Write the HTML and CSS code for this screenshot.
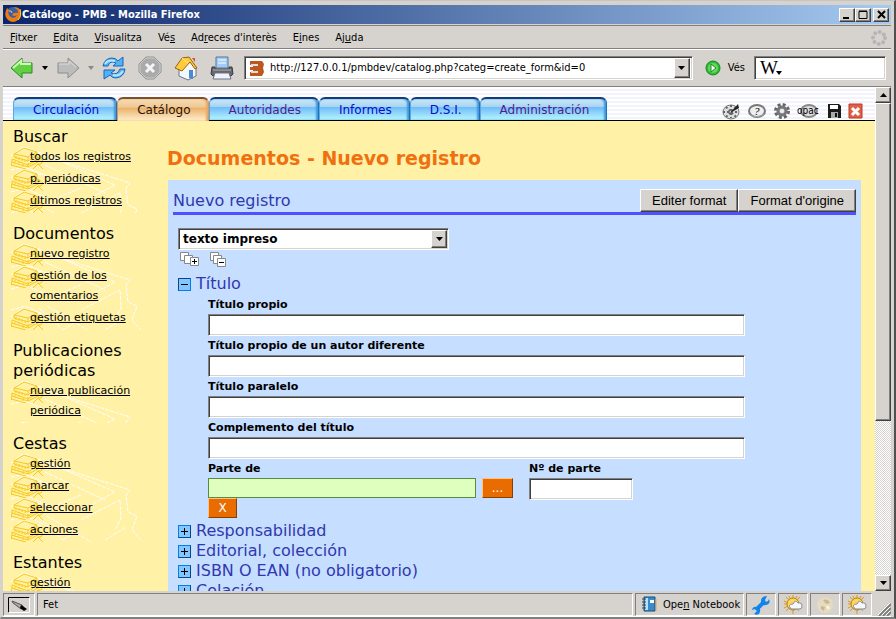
FILE: index.html
```html
<!DOCTYPE html>
<html lang="es">
<head>
<meta charset="utf-8">
<title>Catálogo - PMB</title>
<link rel="stylesheet" href="styles.css">
</head>
<body>
<svg class="defs" aria-hidden="true">
  <symbol id="books" viewBox="0 0 34 22">
    <path d="M0 9 12 0 30 6" fill="none" stroke="#fff"/>
    <g fill="none" stroke="#f8c818" stroke-width="1">
      <path d="M3 7 13 1 26 5 17 10ZM3 7v3l14 4 9-6V5M17 10v4M1 12l16 6 10-6-1-3M1 12v3l16 5 10-5v-3M17 16v4M0 18l15 4M27 10l5 4-2 3-3 0-5 5M27 17l5 5M1 15l-1 4"/>
      <path d="M5 9v3M8 10v3M11 11v3M14 12v3M4 14v3M8 15v3M12 17v3M20 10v3M23 8v3" stroke-dasharray="1 1"/>
    </g>
  </symbol>
  <symbol id="openbook" viewBox="0 0 132 88">
    <g fill="none" stroke="#fff" stroke-dasharray="4 1">
      <path d="M14 0 34 9 119 36 115 41 117 58 126 62 121 76 130 86M34 18 94 46M36 8 104 38 67 58M40 57 50 49 70 41M47 53 58 58M70 66 109 46 110 64 104 76M28 64 52 86M36 62 80 88M94 86 115 73M52 86 66 77M0 23 14 20 40 31M0 45 14 41 36 51M0 66 14 62 32 70"/>
    </g>
  </symbol>
  <symbol id="weather" viewBox="0 0 22 22">
    <path d="M11 1v4M11 16v4M2 10h4M15 10h5M4 3l4 4M18 3l-3 3M4 17l3-3M17 17l-3-3M7 2l2 4M15 2l-2 4M2 7l4 2M2 14l4-2" stroke="#e09818" stroke-width="1"/>
    <circle cx="11" cy="10" r="6" fill="#ffd758" stroke="#bd8010"/>
    <path d="M9 15q-4-5 2-5 2-5 5-1 4-1 4 4 0 2-3 2Z" fill="#f6f8ff" stroke="#858b9d"/>
  </symbol>
</svg>

<header class="titlebar">
  <svg width="17" height="17" viewBox="0 0 17 17"><circle cx="8" cy="8" r="7" fill="#335fae"/><path d="M8 2q5 0 5 5-5-1-6 2 2 2 5 0-2 4-6 2Q2 9 4 4L2 2q-4 8 1 12 5 4 10 0t2-10q-2-4-7-2" fill="#ec7b12"/><path d="M15 3q2 7-2 11" stroke="#ffd23c" fill="none"/><path d="m4 5 2 0 1 2" stroke="#ffc169" fill="none"/></svg>
  <span class="window-title">Catálogo - PMB - Mozilla Firefox</span>
  <button class="bevel winbtn" aria-label="Minimizar"><svg width="12" height="10"><path d="M2 8h6" stroke="#000" stroke-width="2"/></svg></button>
  <button class="bevel winbtn" aria-label="Maximizar"><svg width="12" height="10"><path d="M2 1.5h8v7h-8zM2 1h8" stroke="#000" fill="none"/></svg></button>
  <button class="bevel winbtn close" aria-label="Cerrar"><svg width="12" height="10"><path d="m3 1 7 7m0-7-7 7" stroke="#000" stroke-width="2"/></svg></button>
</header>

<nav class="menubar">
  <a href="#"><u>F</u>itxer</a><a href="#"><u>E</u>dita</a><a href="#"><u>V</u>isualitza</a><a href="#">Vé<u>s</u></a><a href="#">Ad<u>r</u>eces d'interès</a><a href="#">E<u>i</u>nes</a><a href="#">Aj<u>u</u>da</a>
  <svg class="throbber" width="16" height="16"><circle cx="8" cy="8" r="6" fill="none" stroke="#b5b5b5" stroke-width="4" stroke-linecap="round" stroke-dasharray="0 4.71"/></svg>
</nav>

<div class="toolbar">
  <button class="tool" aria-label="Atrás"><svg width="24" height="24"><path d="M1 12 12 2v5h10v10H12v5Z" fill="#63cf45" stroke="#268b25"/><path d="M3 12l8-7v3h10" stroke="#c8ffad" fill="none" stroke-width="2"/></svg></button>
  <button class="tool" aria-label="Historial atrás"><svg width="6" height="4"><path d="M0 0h6L3 4" fill="#000"/></svg></button>
  <button class="tool" aria-label="Adelante"><svg width="24" height="24"><path d="M23 12 12 2v5H2v10h10v5Z" fill="#bcbcbc" stroke="#8c8c8c"/><path d="M3 8h10V5l7 6" stroke="#dedede" fill="none"/></svg></button>
  <button class="tool" aria-label="Historial adelante"><svg width="6" height="4"><path d="M0 0h6L3 4" fill="#888"/></svg></button>
  <button class="tool wide" aria-label="Recargar"><svg width="24" height="24"><path d="M1 10Q3 2 10 2q4 0 6 3l5-4v9H11l3-3Q8 4 6 10ZM23 13q-1 8-9 9-4 0-6-3l-6 4V14h11l-4 3q6 3 9-4Z" fill="#50b3f4" stroke="#1d63bd"/><path d="M3 8q3-5 10-3M21 15q-4 6-10 4" stroke="#b9e9ff" fill="none" stroke-width="2"/></svg></button>
  <button class="tool wide" aria-label="Detener"><svg width="24" height="24"><path d="M8 1h8l7 7v8l-7 7H8l-7-7V8Z" fill="#aaa" stroke="#929292"/><path d="M8 2h8l6 6v8l-6 6H8l-6-6V8Z" fill="none" stroke="#ccc"/><path d="m8 8 8 8m0-8-8 8" stroke="#f4f4f4" stroke-width="3"/></svg></button>
  <button class="tool wide" aria-label="Inicio"><svg width="24" height="25"><path d="M5 12v8l9 4 8-4v-9l-7-6Z" fill="#f3f7ff" stroke="#687589"/><path d="M1 12 8 2l7-1 8 11-2 1-5-7-8 9Z" fill="#ffca3d" stroke="#97640b"/><path d="M8 2 14 7" stroke="#fff09a"/><path d="M15 14h4v9l-4-1z" fill="#4b8acd"/><path d="M18 2h3v4" fill="#d65029"/></svg></button>
  <button class="tool" aria-label="Imprimir"><svg width="24" height="25"><path d="M6 1h12v11H6z" fill="#9fcdf8" stroke="#5e7493"/><path d="M8 4h8M8 7h8" stroke="#fff"/><path d="M2 11h3v2h14v-2h3l1 7-2 2H3l-2-2Z" fill="#67676d" stroke="#39393e"/><path d="M3 14h18" stroke="#bbb"/><path d="M5 17h14l2 6H3Z" fill="#eef3ff" stroke="#6d7587"/></svg></button>
  <div class="sunken address">
    <svg width="16" height="17"><path d="M1 1h12l2 3-1 4 1 4-2 4H1v-4h3v-2H1V7h3V5H1Z" fill="#bd571d"/><path d="M2 5h7M2 12h7" stroke="#ddd" stroke-width="2"/></svg>
    <input type="text" aria-label="Dirección" value="http://127.0.0.1/pmbdev/catalog.php?categ=create_form&amp;id=0">
    <button class="bevel arrowbtn" aria-label="Abrir lista"><svg width="7" height="4"><path d="M0 0h7L3.5 4" fill="#000"/></svg></button>
  </div>
  <button class="tool go"><svg width="16" height="16"><circle cx="8" cy="8" r="7" fill="#31b73b" stroke="#168b20"/><circle cx="8" cy="8" r="5" fill="#67d95b"/><path d="m6 4 5 4-5 4Z" fill="#fff" stroke="#168b20"/></svg><span>Vés</span></button>
  <div class="sunken search"><span class="wiki">W</span><svg class="wikiarrow" width="6" height="4"><path d="M0 0h6L3 4" fill="#000"/></svg><input type="text" aria-label="Buscar en Wikipedia"></div>
</div>

<div class="viewport">
  <div class="page">
    <div class="pagehead">
      <nav class="tabs">
        <a href="#">Circulación</a><a href="#" class="active">Catálogo</a><a href="#" class="visited">Autoridades</a><a href="#">Informes</a><a href="#">D.S.I.</a><a href="#" class="visited">Administración</a>
      </nav>
      <div class="shortcuts">
        <svg width="19" height="18"><ellipse cx="9" cy="10" rx="8" ry="7" fill="#ddd" stroke="#777"/><path d="M9 3v13M1 10h16M4 5l10 10M14 5 4 15" stroke="#666" stroke-width="2" stroke-dasharray="2 2"/><path d="m8 11 8-9 1 4Z" fill="#222"/></svg>
        <svg width="20" height="18"><ellipse cx="10" cy="9" rx="8" ry="6" fill="#eee" stroke="#777" stroke-width="2"/><path d="M3 13q7 4 14-1" stroke="#aaa" fill="none"/><text x="7" y="13" class="qmark">?</text></svg>
        <svg width="18" height="18"><circle cx="9" cy="9" r="6" fill="none" stroke="#666" stroke-width="4" stroke-dasharray="2.7 2"/><circle cx="9" cy="9" r="4" fill="#ccc" stroke="#777" stroke-width="3"/><circle cx="9" cy="9" r="2" fill="#eee"/></svg>
        <svg width="24" height="18"><ellipse cx="12" cy="9" rx="8" ry="6" fill="#ddd" stroke="#888" stroke-width="2"/><text x="0" y="12" class="opac">opac</text></svg>
        <svg width="15" height="16"><path d="M1 1h11l2 2v12H1z" fill="#1b1b1b"/><path d="M3 2h8v4H3z" fill="#fff"/><path d="M4 9h7v6H4z" fill="#aaa"/><path d="M8 10h2v4H8z" fill="#111"/></svg>
        <svg width="15" height="16"><path d="M1 1h13v14H1z" fill="#df6045" stroke="#bf3929"/><path d="m4 5 7 7m0-7-7 7" stroke="#fff" stroke-width="3"/></svg>
      </div>
    </div>
    <div class="columns">
      <aside class="sidebar">
        <section><h2>Buscar</h2><ul><li><a href="#">todos los registros</a></li><li><a href="#">p. periódicas</a></li><li><a href="#">últimos registros</a></li></ul></section>
        <section><h2>Documentos</h2><ul><li><a href="#">nuevo registro</a></li><li><a href="#">gestión de los comentarios</a></li><li><a href="#">gestión etiquetas</a></li></ul></section>
        <section><h2>Publicaciones periódicas</h2><ul><li><a href="#">nueva publicación periódica</a></li></ul></section>
        <section><h2>Cestas</h2><ul><li><a href="#">gestión</a></li><li><a href="#">marcar</a></li><li><a href="#">seleccionar</a></li><li><a href="#">acciones</a></li></ul></section>
        <section><h2>Estantes</h2><ul><li><a href="#">gestión</a></li></ul></section>
      </aside>
      <main>
        <h1>Documentos - Nuevo registro</h1>
        <form class="panel">
          <div class="panelhead"><h3>Nuevo registro</h3><div><button type="button" class="bevel">Editer format</button><button type="button" class="bevel">Format d'origine</button></div></div>
          <div class="body">
            <div class="sunken doctype"><select aria-label="Tipo de documento"><option>texto impreso</option></select><span class="bevel arrowbtn"><svg width="7" height="4"><path d="M0 0h7L3.5 4" fill="#000"/></svg></span></div>
            <div class="expanders">
              <button type="button" aria-label="Desplegar todo"><svg width="20" height="15"><g fill="#fff" stroke="#888"><path d="M.5.5h8v8h-8z"/><path d="M4.500 3.500h8v8h-8z"/><path d="M10.500 5.500h8v8h-8z"/></g><path d="M12 9.500h5M14.500 7v5" stroke="#000"/></svg></button>
              <button type="button" aria-label="Plegar todo"><svg width="17" height="15"><g fill="#fff" stroke="#888"><path d="M.5.5h8v8h-8z"/><path d="M3.500 3.500h8v8h-8z"/><path d="M7.500 6.500h8v8h-8z"/></g><path d="M9 10.500h5" stroke="#000"/></svg></button>
            </div>
            <h4><button type="button" class="toggle" aria-label="Plegar Título"><svg width="9" height="9"><path d="M1 4.500h7" stroke="#000"/></svg></button>Título</h4>
            <div class="fields">
              <label for="f1">Título propio</label><input class="sunken" id="f1" type="text">
              <label for="f2">Título propio de un autor diferente</label><input class="sunken" id="f2" type="text">
              <label for="f3">Título paralelo</label><input class="sunken" id="f3" type="text">
              <label for="f4">Complemento del título</label><input class="sunken" id="f4" type="text">
              <div class="parts">
                <div class="part"><label for="f5">Parte de</label><div class="pick"><input class="green" id="f5" type="text"><button type="button" class="orange">...</button></div><button type="button" class="orange clear">X</button></div>
                <div class="number"><label for="f6">Nº de parte</label><input class="sunken" id="f6" type="text"></div>
              </div>
            </div>
            <h4><button type="button" class="toggle plus" aria-label="Desplegar Responsabilidad"><svg width="9" height="9"><path d="M1 4.500h7M4.500 1v7" stroke="#000"/></svg></button>Responsabilidad</h4>
            <h4><button type="button" class="toggle plus" aria-label="Desplegar Editorial"><svg width="9" height="9"><path d="M1 4.500h7M4.500 1v7" stroke="#000"/></svg></button>Editorial, colección</h4>
            <h4><button type="button" class="toggle plus" aria-label="Desplegar ISBN"><svg width="9" height="9"><path d="M1 4.500h7M4.500 1v7" stroke="#000"/></svg></button>ISBN O EAN (no obligatorio)</h4>
            <h4><button type="button" class="toggle plus" aria-label="Desplegar Colación"><svg width="9" height="9"><path d="M1 4.500h7M4.500 1v7" stroke="#000"/></svg></button>Colación</h4>
          </div>
        </form>
      </main>
    </div>
  </div>
  <div class="scrollbar">
    <button class="bevel" aria-label="Subir"><svg width="7" height="4"><path d="M0 4h7L3.500 0" fill="#000"/></svg></button>
    <div class="bevel thumb"></div><div class="trough"></div>
    <button class="bevel" aria-label="Bajar"><svg width="7" height="4"><path d="M0 0h7L3.500 4" fill="#000"/></svg></button>
  </div>
</div>

<footer class="statusbar">
  <div class="cell first"><svg width="22" height="16"><path d="M.5 15.500V.5h21" stroke="#000" fill="none"/><path d="M.5 15.500h21V.5" stroke="#fff" fill="none"/><path d="m4 4 10 4 2 3-3 1-8-6Z" fill="#aaa" stroke="#555"/><path d="m13 8 6 4-3 2-4-3Z" fill="#000"/></svg></div>
  <div class="cell status">Fet</div>
  <div class="cell notebook"><svg width="16" height="17"><path d="M3 1h11v14H3z" fill="#398bd0" stroke="#174c7e"/><path d="M4 2h3v12H4z" fill="#b7e2fb"/><path d="M9 4h4v3H9z" fill="#fff"/><path d="M1 3h4M1 6h4M1 9h4M1 12h4" stroke="#444"/><path d="M15 3v12" stroke="#dfa847"/></svg><span>Ope<u>n</u> Notebook</span></div>
  <div class="cell icon"><svg width="20" height="20"><path d="m5 15 8-8" stroke="#1184ee" stroke-width="4"/><path d="M18 4q2 5-3 6t-5-4 6-5l-2 4 1 2 2-1ZM1 15q1-4 5-3t3 5-6 2l3-3-2-2Z" fill="#1184ee"/></svg></div>
  <div class="cell icon"><svg width="22" height="22"><use href="#weather"/></svg></div>
  <div class="cell icon"><svg width="20" height="20"><circle cx="10" cy="10" r="8" fill="#e4dbc2"/><path d="M8 5q5-2 7 3l-4 1Zm-2 6 4 1-1 4-3-2Z" fill="#c9b88e"/><path d="M11 11q3-1 4 2l-2 2Z" fill="#fff6d9"/></svg></div>
  <div class="cell icon"><svg width="22" height="22"><use href="#weather"/></svg></div>
  <svg class="grip" width="13" height="13"><path d="M1 13 13 1M5 13l8-8M9 13l4-4" stroke="#808080" stroke-width="2"/><path d="M0 12 12 0M4 12l8-8M8 12l4-4" stroke="#fff"/></svg>
</footer>
<script src="script.js"></script>
</body>
</html>
```
FILE: styles.css
```css
* { box-sizing: border-box; }
body {
  margin: 0; height: 100vh; overflow: hidden;
  display: flex; flex-direction: column;
  padding: 3px 3px 0 2px;
  background: #d6d3ce; color: #000;
  border: solid; border-width: 1px 2px 2px 1px;
  border-color: #c8c5c0 #505050 #808080 #d6d3ce;
  font: 11px/14px "DejaVu Sans Condensed", "DejaVu Sans", sans-serif;
}
button, input, select { font: inherit; margin: 0; color: inherit; border-radius: 0; }
button { padding: 0; }
svg { display: block; flex: none; }
h1, h2, h3, h4, ul { margin: 0; padding: 0; font-weight: normal; }
.defs { position: absolute; width: 0; height: 0; }
.bevel {
  background: #d6d3ce; border: 1px solid; border-color: #fff #404040 #404040 #fff;
  box-shadow: inset -1px -1px #808080;
  display: flex; align-items: center; justify-content: center;
}
.sunken {
  background: #fff; border: 1px solid; border-color: #808080 #fff #fff #808080;
  box-shadow: inset 1px 1px #404040, inset -1px -1px #d6d3ce;
}

.titlebar {
  display: flex; align-items: center; flex: none; height: 19px; padding: 0 2px; margin-top: 1px;
  background: linear-gradient(90deg, #0a246a, #a6caf0);
  color: #fff; font-weight: bold;
}
.window-title { flex: 1; }
.winbtn { width: 16px; height: 14px; }
.close { margin-left: 2px; }
.menubar {
  display: flex; align-items: center; gap: 16px; flex: none; height: 24px; margin-top: 1px; padding: 1px 4px 0 7px;
  border-top: 1px solid #808080; border-bottom: 1px solid #808080;
}
.menubar a { color: #000; text-decoration: none; }
.throbber { margin-left: auto; }
.toolbar {
  display: flex; align-items: center; gap: 8px; flex: none; height: 38px; padding: 0 5px 0 7px;
  border-top: 1px solid #fff; border-bottom: 1px solid #808080;
}
.tool { border: 0; background: none; display: flex; align-items: center; }
.wide { margin-right: 4px; }
.address { display: flex; align-items: center; flex: 1; height: 24px; margin-left: 2px; padding: 0 2px 0 4px; }
.address input, .search input { border: 0; background: none; flex: 1; min-width: 0; outline: 0; }
.address input { padding: 0 5px; }
.arrowbtn { width: 16px; height: 20px; }
.go { gap: 7px; margin: 0 1px 0 4px; }
.search { display: flex; align-items: center; width: 132px; height: 24px; padding-left: 5px; }
.wiki { font: 19px/20px "Liberation Serif", serif; }
.wikiarrow { margin-top: 10px; margin-left: -2px; }

.viewport { flex: 1; min-height: 0; display: flex; }
.page {
  flex: 1; min-width: 0; overflow: hidden; display: flex; flex-direction: column;
  background: #fff1a5; font-family: "DejaVu Sans", sans-serif;
}
.pagehead {
  display: flex; justify-content: space-between; align-items: flex-end; flex: none; height: 34px;
  padding: 0 12px 0 10px; border-bottom: 1px solid #000;
  background: repeating-linear-gradient(#fff 0 2px, #f3f3fd 2px 4px);
}
.tabs { display: flex; align-items: flex-end; }
.tabs a {
  height: 23px; padding: 0 17px 0 19px; font-size: 12px; line-height: 22px; text-decoration: none; color: #0808d0;
  border: solid; border-width: 2px 1px 0; border-color: #123c80 #2470b8 #2470b8 #5aa8e0;
  border-radius: 6px 6px 0 0;
  background: linear-gradient(#d0e8f4, #a4d4f4 38%, #70bcf8 40%, #b8f6ff);
  box-shadow: inset -2px 0 2px #3c98dc;
}
.tabs .visited { color: #551a8b; }
.tabs .active {
  height: 24px; margin-bottom: -1px; color: #2a1208; border-color: #7a5030 #d89858 #d89858;
  background: linear-gradient(#f4dcb8, #f0c890 38%, #eab068 40%, #fff0d0);
  box-shadow: inset -2px 0 2px #e8a868;
}
.shortcuts { display: flex; align-items: center; gap: 6px; }
.qmark { font: italic 11px "Liberation Serif", serif; }
.opac { font: 10px "DejaVu Sans Condensed", sans-serif; }

.columns { flex: 1; min-height: 0; display: flex; }
.sidebar { width: 165px; flex: none; padding: 6px 10px 0 8px; }
.sidebar section { padding-bottom: 11px; }
.sidebar h2 { font-size: 16px; line-height: 20px; padding-left: 2px; }
.sidebar ul { list-style: none; position: relative; overflow: hidden; }
.sidebar li { position: relative; padding: 0 0 2px 19px; line-height: 20px; }
.sidebar li a { position: relative; color: #000; }
.book, .sketch { position: absolute; left: 0; top: 0; }

main { flex: 1; min-width: 0; padding-right: 14px; }
h1 { font-size: 19px; line-height: 24px; padding: 25px 0 10px; font-weight: bold; color: #f07010; margin-left: -1px; }
.panel { background: #c6deff; padding: 9px 5px 0; min-height: 500px; }
.panelhead { display: flex; justify-content: space-between; align-items: flex-end; border-bottom: 3px solid #5050ff; }
.panelhead > div { display: flex; }
.panelhead button { height: 23px; padding: 0 11px; font: 13px "Liberation Sans", sans-serif; }
h3 { font-size: 16px; line-height: 23px; color: #3038b0; }
.body { padding: 13px 5px 0; }
.doctype { display: flex; align-items: center; width: 271px; height: 22px; padding-right: 1px; }
.doctype .arrowbtn { height: 18px; }
.doctype select { flex: 1; appearance: none; border: 0; background: none; padding: 0 4px; font-weight: bold; font-size: 12px; outline: 0; }
.expanders { display: flex; gap: 10px; padding: 2px 2px 7px; }
.expanders button { border: 0; background: none; }
h4 { display: flex; align-items: center; gap: 5px; font-size: 16px; line-height: 20px; color: #3038b0; }
.toggle { width: 13px; height: 13px; padding: 1px; background: #84c6ff; border: 1px solid; border-color: #084888 #0080f0 #0080f0 #084888; }
.plus { border-color: #0080f0 #084888 #084888 #0080f0; }
.fields { width: 567px; max-width: 100%; padding: 2px 0 3px 30px; }
.fields label { display: block; font-size: 11px; line-height: 18px; font-weight: bold; }
.fields input { display: block; width: 100%; height: 22px; margin-bottom: 1px; }
.parts { display: flex; gap: 16px; }
.part { width: 305px; }
.number { width: 104px; }
.pick { display: flex; gap: 6px; }
.fields .green { width: 268px; height: 20px; margin: 0; background: #deffbd; border: 1px solid #5a8c40; }
.orange { height: 20px; flex: 1; background: #e86c00; color: #fff; border: 1px solid; border-color: #ffc080 #884000 #884000 #ffc080; font-size: 12px; line-height: 16px; }
.clear { width: 29px; display: block; }

.scrollbar { width: 16px; flex: none; display: flex; flex-direction: column; }
.scrollbar button { height: 16px; flex: none; }
.thumb { flex: 318; }
.trough { flex: 155; background: repeating-conic-gradient(#fff 0 25%, #d6d3ce 0 50%) 0 0 / 2px 2px; }

.statusbar { display: flex; gap: 2px; flex: none; height: 26px; padding-top: 2px; border-bottom: 1px solid #fff; }
.cell { display: flex; align-items: center; border: 1px solid; border-color: #808080 #fff #fff #808080; }
.first { width: 32px; justify-content: center; }
.status { flex: 1; padding-left: 5px; }
.notebook { width: 109px; padding-left: 5px; gap: 6px; }
.icon { width: 30px; justify-content: center; }
.grip { align-self: flex-end; margin: 0 0 0 4px; }
```
FILE: script.js
```js
// Adds the decorative line drawings behind the side menu.
function drawing(id, cls, width, height) {
  const ns = "http://www.w3.org/2000/svg";
  const svg = document.createElementNS(ns, "svg");
  svg.setAttribute("class", cls);
  svg.setAttribute("width", width);
  svg.setAttribute("height", height);
  svg.setAttribute("aria-hidden", "true");
  const use = document.createElementNS(ns, "use");
  use.setAttribute("href", "#" + id);
  svg.append(use);
  return svg;
}
document.querySelectorAll(".sidebar ul").forEach(function (list) {
  list.querySelectorAll("li").forEach(function (item) {
    item.prepend(drawing("books", "book", 34, 22));
  });
  list.prepend(drawing("openbook", "sketch", 132, 88));
});
```
